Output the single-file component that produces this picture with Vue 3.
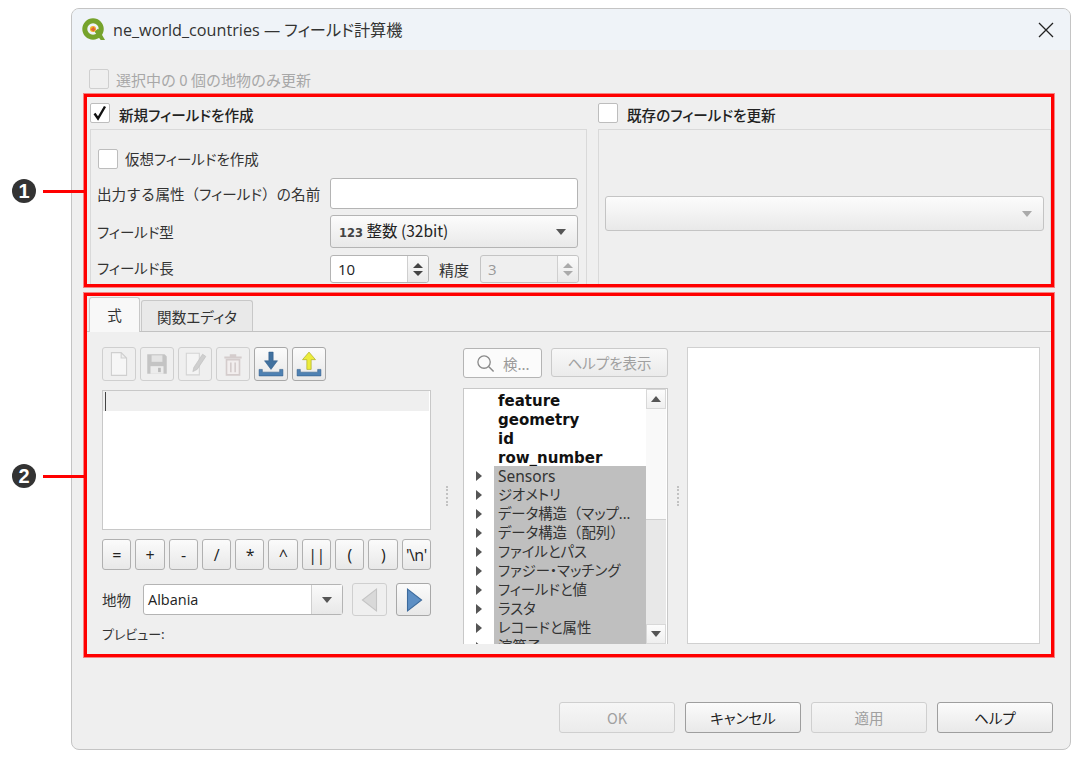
<script setup>
const ops = ['=', '+', '-', '/', '*', '^', '||', '(', ')', "'\\n'"]
const boldRows = ['feature', 'geometry', 'id', 'row_number']
const groupRows = ['Sensors', 'ジオメトリ', 'データ構造（マップ...', 'データ構造（配列）', 'ファイルとパス', 'ファジー・マッチング', 'フィールドと値', 'ラスタ', 'レコードと属性', '演算子']
const parts = (s) => s.split(/([（）])/).filter(Boolean)
</script>

<template>
  <div class="page">
    <div class="note note-one"><span class="num">1</span><span class="lead"></span></div>
    <div class="note note-two"><span class="num">2</span><span class="lead"></span></div>

    <div class="window">
      <header class="titlebar">
        <svg class="logo" viewBox="0 0 24 24">
          <circle cx="11.5" cy="11.5" r="8.6" fill="none" stroke="#76a32c" stroke-width="5.2" />
          <path d="M13 14l6.5 9H24L17 11z" fill="#76a32c" />
          <circle cx="11.5" cy="11.5" r="3.2" fill="#f0b429" />
          <path d="M9 12l3-3 2 3-2 2z" fill="#e2603a" />
        </svg>
        <span class="title">ne_world_countries — フィールド計算機</span>
        <svg class="close" viewBox="0 0 16 16"><path d="M1 1l14 14M15 1L1 15" stroke="#222" stroke-width="1.3" /></svg>
      </header>

      <main class="main">
        <div class="selected-row">
          <span class="check disabled"></span>
          <span class="selected-text">選択中の 0 個の地物のみ更新</span>
        </div>

        <section class="red red-one">
          <div class="col">
            <div class="col-head">
              <span class="check head-check">
                <svg viewBox="0 0 18 18"><path d="M3.5 9.5l3.5 5L14 2.5" fill="none" stroke="#111" stroke-width="2.4" /></svg>
              </span>
              <span class="head-text">新規フィールドを作成</span>
            </div>
            <div class="group group-left">
              <div class="virtual-row">
                <span class="check"></span>
                <span class="virtual-text">仮想フィールドを作成</span>
              </div>
              <div class="form-row row-name">
                <label class="full">出力する属性（<span class="kana">フィールド</span>）の名前</label>
                <div class="input name-input"></div>
              </div>
              <div class="form-row row-type">
                <label>フィールド型</label>
                <div class="combo type-combo">
                  <span class="type-text"><b>123</b> 整数 (32bit)</span>
                  <span class="tri-down"></span>
                </div>
              </div>
              <div class="form-row row-len">
                <label>フィールド長</label>
                <div class="len-fields">
                  <div class="spin spin-len">
                    <span class="spin-val">10</span>
                    <span class="spin-btns"><i class="up"></i><i class="down"></i></span>
                  </div>
                  <span class="prec-label">精度</span>
                  <div class="spin spin-prec">
                    <span class="spin-val">3</span>
                    <span class="spin-btns"><i class="up"></i><i class="down"></i></span>
                  </div>
                </div>
              </div>
            </div>
          </div>
          <div class="col col-right">
            <div class="col-head">
              <span class="check head-check"></span>
              <span class="head-text">既存のフィールドを更新</span>
            </div>
            <div class="group group-right">
              <div class="combo update-combo"><span class="tri-down pale"></span></div>
            </div>
          </div>
        </section>

        <section class="red red-two">
          <div class="tabs">
            <div class="tab active">式</div>
            <div class="tab">関数エディタ</div>
          </div>
          <div class="panes">
            <div class="left-pane">
              <div class="toolbar">
                <button class="tool off">
                  <svg viewBox="0 0 24 24"><path d="M5 1.5h9l5 5v16H5zM14 1.5v5h5" fill="#f6f6f6" stroke="#cfcfcf" /></svg>
                </button>
                <button class="tool off">
                  <svg viewBox="0 0 24 24"><path d="M3 3h16l2 2v16H3z" fill="#c4c4c4" /><path d="M7 4h10v6H7z" fill="#e4e4e4" /><path d="M6 14h12v7H6z" fill="#ececec" /><path d="M13 15.500h2.500v4H13z" fill="#bbb" /></svg>
                </button>
                <button class="tool off">
                  <svg viewBox="0 0 24 24"><path d="M4 2h12v20H4z" fill="#f4f4f4" stroke="#d4d4d4" /><path d="M10 19l1-4 8-12 3 2-8 12z" fill="#cfcfcf" stroke="#c0c0c0" stroke-width=".6" /></svg>
                </button>
                <button class="tool off">
                  <svg viewBox="0 0 24 24"><path d="M9 4h6M4 6h16" stroke="#d4cccc" stroke-width="2" /><path d="M6 8h12v14H6z" fill="#f2eeee" stroke="#d4cccc" stroke-width="1.500" /><path d="M10 10.500v9M14 10.500v9" stroke="#d4cccc" stroke-width="1.500" /></svg>
                </button>
                <button class="tool">
                  <svg viewBox="0 0 24 24"><path d="M10 1h4v8h4l-6 8-6-8h4z" fill="#41719f" stroke="#2d5a88" stroke-width=".5" /><path d="M1 17h3v2.500h16V17h3v6H1z" fill="#4e81b3" stroke="#2d5a88" stroke-width=".5" /></svg>
                </button>
                <button class="tool">
                  <svg viewBox="0 0 24 24"><path d="M12 1l6 7h-4v9h-4V8H6z" fill="#ecec3c" stroke="#a8a820" stroke-width=".6" /><path d="M1 17h3v2.500h16V17h3v6H1z" fill="#4e81b3" stroke="#2d5a88" stroke-width=".5" /></svg>
                </button>
              </div>
              <div class="editor">
                <div class="current-line"><span class="caret"></span></div>
              </div>
              <div class="ops">
                <button v-for="op in ops" :key="op" class="op">{{ op }}</button>
              </div>
              <div class="feature-row">
                <span class="feature-label">地物</span>
                <div class="feature-combo">
                  <span class="feature-val">Albania</span>
                  <span class="feature-arrow"><span class="tri-down"></span></span>
                </div>
                <button class="nav off">
                  <svg viewBox="0 0 20 24"><path d="M16 2v20L3 12z" fill="#d9d9d9" stroke="#c4c4c4" /></svg>
                </button>
                <button class="nav">
                  <svg viewBox="0 0 20 24"><path d="M4 2v20l13-10z" fill="#5d8fc4" stroke="#3c6a9c" /></svg>
                </button>
              </div>
              <div class="preview">プレビュー:</div>
            </div>

            <div class="splitter"></div>

            <div class="mid-pane">
              <div class="search-row">
                <div class="search">
                  <svg viewBox="0 0 20 20"><circle cx="8.500" cy="8.500" r="6.500" fill="none" stroke="#8a8a8a" stroke-width="1.400" /><path d="M13.500 13.500l5 5" stroke="#8a8a8a" stroke-width="1.600" /></svg>
                  <span>検...</span>
                </div>
                <button class="help-btn">ヘルプを表示</button>
              </div>
              <div class="tree">
                <div class="tree-list">
                  <div v-for="r in boldRows" :key="r" class="tree-row bold"><span>{{ r }}</span></div>
                  <div v-for="r in groupRows" :key="r" class="tree-row grp" :class="{ latin: r === 'Sensors' }">
                    <span class="tree-arrow"></span><span v-for="(p, i) in parts(r)" :key="i" :class="{ paren: p === '（' || p === '）' }">{{ p }}</span>
                  </div>
                </div>
                <div class="scroll">
                  <div class="sc-btn"><span class="tri-up"></span></div>
                  <div class="sc-thumb"></div>
                  <div class="sc-track"></div>
                  <div class="sc-btn"><span class="tri-down"></span></div>
                </div>
              </div>
            </div>

            <div class="splitter"></div>

            <div class="help-pane"></div>
          </div>
        </section>

        <footer class="actions">
          <button class="act off">OK</button>
          <button class="act">キャンセル</button>
          <button class="act off">適用</button>
          <button class="act">ヘルプ</button>
        </footer>
      </main>
    </div>
  </div>
</template>

<style scoped>
.page {
  position: relative;
  width: 1080px;
  height: 757px;
  overflow: hidden;
  background: #fff;
  padding-top: 8px;
  box-sizing: border-box;
  font-family: "Noto Sans CJK JP", "Noto Sans", sans-serif;
  font-size: 14px;
  color: #333;
  font-feature-settings: "palt" 1;
}
button { font-family: inherit; font-feature-settings: inherit; padding: 0; }
.note { position: absolute; left: 12px; display: flex; align-items: center; height: 24px; }
.note-one { top: 179px; }
.note-two { top: 464px; }
.num {
  width: 24px; height: 24px; border-radius: 50%;
  background: #333; color: #fff;
  font: bold 20px/24px "Liberation Sans", sans-serif;
  text-align: center;
}
.lead { width: 41px; height: 3px; margin-left: 7px; background: #f00; }

.window {
  margin-left: 71px;
  width: 1000px;
  height: 742px;
  box-sizing: border-box;
  border: 1px solid #c4c4c4;
  border-radius: 8px;
  background: #efefef;
  overflow: hidden;
  display: flex;
  flex-direction: column;
}
.titlebar {
  height: 41px;
  flex: none;
  background: #eff3f8;
  display: flex;
  align-items: center;
  padding: 0 16px 0 10px;
}
.logo { width: 23px; height: 23px; flex: none; }
.title { margin: 0 0 2px 8px; font-size: 16.2px; color: #333; flex: 1; font-family: "Open Sans", "Noto Sans CJK JP", sans-serif; }
.close { width: 16px; height: 16px; margin-right: 0; }

.main { padding: 0 12px; flex: 1; display: flex; flex-direction: column; }

.check {
  display: block; flex: none;
  width: 20px; height: 20px;
  box-sizing: border-box;
  background: #fff;
  border: 1px solid #bdbdbd;
  border-radius: 2px;
}
.check svg { display: block; width: 18px; height: 18px; }
.check.disabled { background: #efefef; border-color: #cfcfcf; }

.selected-row { height: 44px; flex: none; display: flex; align-items: flex-start; padding: 19px 0 0 5px; box-sizing: border-box; }
.selected-text { margin-left: 7px; color: #a8a8a8; font-size: 15px; line-height: 21px; font-feature-settings: normal; }

.red { box-sizing: border-box; border: 3px solid #f00; box-shadow: 0 0 0 1px rgba(255, 0, 0, .45); width: 970px; flex: none; }
.red-one { height: 193px; display: flex; padding-left: 3px; }
.red-two { height: 364px; margin-top: 6px; }

.col { width: 497px; display: flex; flex-direction: column; }
.col-right { flex: 1; margin-left: 11px; width: auto; }
.col-head { height: 32px; flex: none; display: flex; align-items: flex-start; padding-top: 6px; box-sizing: border-box; }
.head-text { margin-left: 9px; font-size: 14.6px; line-height: 24px; font-weight: 500; color: #222; }
.group { flex: 1; border: 1px solid #d9d9d9; border-bottom: 0; }
.group-left { padding: 19px 8px 0 6px; display: flex; flex-direction: column; }
.group-right { display: flex; align-items: flex-start; padding: 66px 6px 0 6px; }

.virtual-row { display: flex; align-items: center; height: 20px; padding-left: 1px; gap: 7px; font-size: 14.5px; }
.virtual-text { margin-bottom: 2px; }
.form-row { display: flex; align-items: center; }
.form-row label { width: 233px; flex: none; font-size: 14.5px; white-space: nowrap; }
.form-row label.full { font-size: 14.6px; font-feature-settings: normal; }
.kana { font-feature-settings: "palt" 1; }
.row-name { margin-top: 9px; }
.row-type { margin-top: 6px; }
.row-len { margin-top: 7px; }
.row-len label { padding-bottom: 3px; }

.input { height: 31px; box-sizing: border-box; background: #fff; border: 1px solid #b4b4b4; border-radius: 3px; }
.name-input { width: 249px; }
.combo {
  box-sizing: border-box;
  border: 1px solid #b4b4b4;
  border-radius: 3px;
  background: linear-gradient(#fcfcfc, #e9e9e9);
  display: flex;
  align-items: center;
  justify-content: space-between;
}
.type-combo { width: 249px; height: 33px; padding: 0 11px 0 8px; }
.type-text { font-size: 15.5px; color: #222; margin-bottom: 3px; }
.type-text b { font: bold 11.5px "DejaVu Sans", sans-serif; color: #444; }
.update-combo { width: 100%; height: 35px; justify-content: flex-end; padding-right: 11px; border-color: #c4c4c4; }
.tri-down { width: 0; height: 0; border-left: 5.5px solid transparent; border-right: 5.5px solid transparent; border-top: 6px solid #555; }
.tri-down.pale { border-top-color: #aaa; }
.tri-up { width: 0; height: 0; border-left: 5.5px solid transparent; border-right: 5.5px solid transparent; border-bottom: 6px solid #555; }

.len-fields { display: flex; align-items: center; }
.spin {
  height: 28px; box-sizing: border-box;
  border: 1px solid #b4b4b4; border-radius: 3px;
  background: #fff;
  display: flex;
}
.spin-len { width: 99px; }
.spin-prec { width: 99px; background: #efefef; color: #999; border-color: #c4c4c4; }
.spin-val { flex: 1; padding-left: 7px; font: 15px/26px "Open Sans", sans-serif; color: #222; }
.spin-prec .spin-val { color: #999; }
.spin-btns { width: 20px; border-left: 1px solid #cfcfcf; background: linear-gradient(#fafafa, #e9e9e9); display: flex; flex-direction: column; align-items: center; justify-content: center; gap: 3px; border-radius: 0 3px 3px 0; }
.spin-btns i { width: 0; height: 0; border-left: 5px solid transparent; border-right: 5px solid transparent; }
.spin-btns .up { border-bottom: 5px solid #444; }
.spin-btns .down { border-top: 5px solid #444; }
.spin-prec .spin-btns .up { border-bottom-color: #aaa; }
.spin-prec .spin-btns .down { border-top-color: #aaa; }
.prec-label { margin: 0 10px; font-size: 15px; width: 31px; }

.tabs { height: 36px; box-sizing: border-box; display: flex; align-items: flex-end; padding-left: 2px; border-bottom: 1px solid #c2c2c2; gap: 1px; }
.tab {
  box-sizing: border-box;
  width: 112px; height: 31px;
  background: #e9e9e9;
  border: 1px solid #c8c8c8;
  border-bottom: 0;
  border-radius: 3px 3px 0 0;
  text-align: center;
  font-size: 14.6px;
  line-height: 31px;
}
.tab.active { width: 51px; height: 35px; margin-bottom: -1px; background: #f8f8f8; line-height: 34px; }

.panes { display: grid; grid-template-columns: 329px 32px 205px 19px 353px; padding: 15px 0 0 15px; height: 297px; }
.splitter { width: 2px; height: 20px; justify-self: center; align-self: center; border-left: 2px dotted #c2c2c2; box-sizing: border-box; }

.left-pane { display: flex; flex-direction: column; }
.toolbar { display: flex; gap: 4px; height: 34px; }
.tool {
  width: 34px; height: 34px;
  border: 1px solid #a8a8a8; border-radius: 3px;
  background: linear-gradient(#fbfbfb, #e8e8e8);
  display: flex; align-items: center; justify-content: center;
}
.tool.off { border-color: #cfcfcf; background: #efefef; }
.tool svg { width: 26px; height: 26px; }
.editor { margin-top: 9px; height: 140px; box-sizing: border-box; background: #fff; border: 1px solid #c8c8c8; padding-right: 1px; }
.current-line { height: 20px; background: #efefef; padding: 1px 0 0 2px; box-sizing: border-box; }
.caret { display: block; width: 1px; height: 19px; background: #444; }
.ops { display: flex; gap: 4px; margin-top: 9px; }
.op {
  flex: 1; min-width: 0; height: 31px;
  border: 1px solid #b0b0b0; border-radius: 3px;
  background: linear-gradient(#fbfbfb, #e8e8e8);
  font: 16px "Open Sans", sans-serif;
  letter-spacing: -.5px;
  color: #222;
}
.feature-row { display: flex; align-items: center; margin-top: 13px; height: 33px; }
.feature-label { width: 41px; flex: none; font-size: 14.5px; }
.feature-combo { width: 200px; height: 31px; box-sizing: border-box; border: 1px solid #b4b4b4; border-radius: 3px; background: #fff; display: flex; }
.feature-val { flex: 1; padding-left: 4px; font: 14.5px/29px "Open Sans", sans-serif; color: #222; }
.feature-arrow { width: 30px; background: linear-gradient(#fafafa, #e8e8e8); border-left: 1px solid #cfcfcf; display: flex; align-items: center; justify-content: center; }
.nav {
  width: 35px; height: 33px; margin-left: 9px;
  border: 1px solid #a8a8a8; border-radius: 3px;
  background: linear-gradient(#fbfbfb, #e8e8e8);
  display: flex; align-items: center; justify-content: center;
}
.nav.off { border-color: #cfcfcf; background: #efefef; }
.nav svg { width: 22px; height: 26px; }
.preview { margin-top: 8px; font-size: 13px; line-height: 20px; }

.mid-pane { display: flex; flex-direction: column; }
.search-row { display: flex; margin-top: 1px; height: 30px; gap: 9px; }
.search { width: 79px; height: 30px; box-sizing: border-box; border: 1px solid #b4b4b4; border-radius: 3px; background: #fbfbfb; display: flex; align-items: center; padding-left: 12px; color: #999; font-size: 14.5px; }
.search svg { width: 19px; height: 19px; flex: none; margin-right: 8px; }
.help-btn { width: 117px; height: 29px; border: 1px solid #cacaca; border-radius: 3px; background: linear-gradient(#f8f8f8, #ebebeb); color: #a0a0a0; font-size: 14.5px; }
.tree { margin-top: 10px; height: 256px; box-sizing: border-box; display: flex; background: #fff; border: 1px solid #c8c8c8; border-bottom: 0; overflow: hidden; }
.tree-list { width: 182px; flex: none; padding-top: 1px; overflow: hidden; }
.tree-row { height: 19px; line-height: 20px; white-space: nowrap; position: relative; padding-left: 34px; font-size: 14.4px; }
.tree-row.bold { font: bold 15px/23px "DejaVu Sans", sans-serif; color: #111; }
.tree-row.grp { background: linear-gradient(#bfbfbf, #bfbfbf) 30px 0 / 152px 100% no-repeat; color: #333; font-family: "Noto Sans", "Noto Sans CJK JP", sans-serif; }
.tree-row.latin { font-size: 15.5px; }
.paren { font-feature-settings: normal; }
.tree-arrow { position: absolute; left: 12px; top: 5px; width: 0; height: 0; border-top: 5.500px solid transparent; border-bottom: 5.500px solid transparent; border-left: 6px solid #555; }
.scroll { width: 20px; flex: none; display: flex; flex-direction: column; }
.sc-btn { height: 20px; flex: none; background: linear-gradient(#fcfcfc, #efefef); border: 1px solid #d8d8d8; box-sizing: border-box; display: flex; align-items: center; justify-content: center; }
.sc-thumb { height: 110px; flex: none; background: #f9f9f9; border-bottom: 1px solid #d0d0d0; }
.sc-track { flex: 1; background: #e8e8e8; }
.help-pane { background: #fff; border: 1px solid #d0d0d0; box-sizing: border-box; }

.actions { flex: none; width: 970px; display: flex; justify-content: flex-end; gap: 10px; margin-top: 45px; padding-right: 1px; box-sizing: border-box; }
.act { width: 116px; height: 31px; border: 1px solid #9e9e9e; border-radius: 3px; background: linear-gradient(#fbfbfb, #e9e9e9); color: #222; font-size: 14.5px; }
.act.off { border-color: #cfcfcf; color: #a0a0a0; background: linear-gradient(#f6f6f6, #ebebeb); }
</style>

<style>
html, body { margin: 0; background: #fff; overflow: hidden; }
</style>
